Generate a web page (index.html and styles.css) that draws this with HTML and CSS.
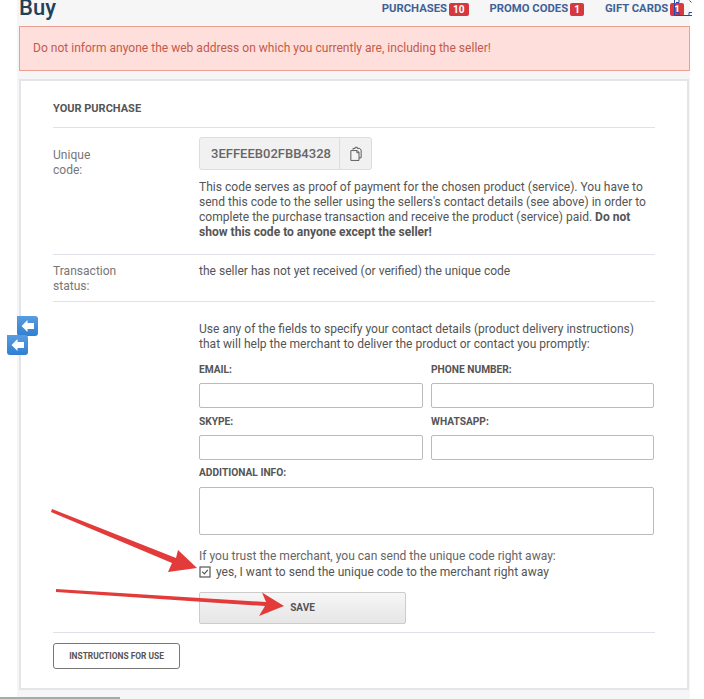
FILE: index.html
```html
<!DOCTYPE html>
<html lang="en">

<head>
	<meta charset="UTF-8">
	<meta name="viewport" content="width=device-width, initial-scale=1.0">
	<title>Buy</title>
	<link rel="stylesheet" href="styles.css">
</head>

<body>
	<div class="page">
		<header class="topbar">
			<h1>Buy</h1>
			<nav class="topnav">
				<a href="#">PURCHASES <span class="badge">10</span></a>
				<a href="#">PROMO CODES <span class="badge">1</span></a>
				<a href="#">GIFT CARDS <span class="badge">1</span></a>
			</nav>
		</header>

		<div class="alert">Do not inform anyone the web address on which you currently are, including the seller!</div>

		<main class="card">
			<h2>YOUR PURCHASE</h2>

			<section class="row row-code">
				<div class="label">Unique<br>code:</div>
				<div class="content">
					<div class="code-box">
						<span class="code">3EFFEEB02FBB4328</span>
						<span class="copy">
							<svg width="12" height="16" viewBox="0 0 14 18" fill="none" stroke="#555" stroke-width="1.1">
								<path d="M3.5 4V2.5H6V1.2H8.5V2.5H11.5L13 4.5V13.5H10.5" />
								<path d="M1 5H8.5L10.5 7V16.5H1Z" fill="#f4f4f4" />
								<path d="M8 5V7.5H10.5" />
							</svg>
						</span>
					</div>
					<p>This code serves as proof of payment for the chosen product (service). You have to send this code to the seller using the sellers's contact details (see above) in order to complete the purchase transaction and receive the product (service) paid. <b>Do not show this code to anyone except the seller!</b></p>
				</div>
			</section>

			<section class="row row-status">
				<div class="label">Transaction<br>status:</div>
				<div class="content">the seller has not yet received (or verified) the unique code</div>
			</section>

			<section class="row row-form">
				<div class="label"></div>
				<div class="content">
					<p class="intro">Use any of the fields to specify your contact details (product delivery instructions) that will help the merchant to deliver the product or contact you promptly:</p>
					<div class="fields">
						<label>EMAIL:<input type="text"></label>
						<label>PHONE NUMBER:<input type="text"></label>
						<label class="short">SKYPE:<input type="text"></label>
						<label class="short">WHATSAPP:<input type="text"></label>
						<label class="wide">ADDITIONAL INFO:<textarea></textarea></label>
					</div>
					<p class="trust">If you trust the merchant, you can send the unique code right away:</p>
					<div class="check">
						<svg width="12" height="12" viewBox="0 0 12 12" fill="none" stroke="#555">
							<rect x="1" y="1" width="10" height="10" stroke-width="1.2" />
							<path d="M3.2 5.6L5.4 7.8L8.8 3.8" stroke-width="1.2" />
						</svg>
						<span>yes, I want to send the unique code to the merchant right away</span>
					</div>
					<button class="save" type="button">SAVE</button>
				</div>
			</section>

			<div class="foot">
				<button class="instructions" type="button">INSTRUCTIONS FOR USE</button>
			</div>
		</main>
	</div>

	<div class="back back-1"><svg width="14" height="12" viewBox="0 0 14 12"><path d="M0.5 6L6.5 0V3H13V9H6.5V12Z" fill="#fff" /></svg></div>
	<div class="back back-2"><svg width="14" height="12" viewBox="0 0 14 12"><path d="M0.5 6L6.5 0V3H13V9H6.5V12Z" fill="#fff" /></svg></div>

	<svg class="handle" width="20" height="17" viewBox="0 0 20 17" fill="none" stroke="#2a47a8">
		<path d="M0.5 0V15.5H18" />
		<path d="M15.5 0.5L17.5 2.5M15 12.5H18M15 12.5V15M2 12.5H5M5 12.5V15M2 2.5H5V0" stroke-width="1" />
	</svg>

	<svg class="arrows" width="704" height="699" viewBox="0 0 704 699">
		<path d="M52 509L176 558L178 550L197 568L168 572L172 563L51 512Z" fill="#e33a3a" />
		<path d="M56 589L266 602L262 592.5L284 606L259 616L265 606L56 592Z" fill="#e33a3a" />
	</svg>

	<div class="bottom-line"></div>
</body>

</html>
```

FILE: styles.css
```css
* {
	box-sizing: border-box;
}

html,
body {
	margin: 0;
	height: 699px;
	overflow: hidden;
	background: #fff;
}

body {
	font-family: Roboto, sans-serif;
	font-size: 12.05px;
	color: #555;
}

.page {
	width: 673px;
	height: 699px;
	margin-left: 17px;
	padding-left: 2px;
	background: #f6f6f7;
}

.topbar {
	height: 26px;
	display: flex;
	justify-content: space-between;
}

h1 {
	margin: -6px 0 0;
	font-size: 22px;
	line-height: 28px;
	font-weight: 500;
	color: #23405a;
}

.topnav {
	display: flex;
	gap: 21px;
	padding-top: 2px;
	padding-right: 6px;
}

.topnav a {
	display: flex;
	gap: 2px;
	font-size: 11.3px;
	line-height: 14px;
	font-weight: 700;
	color: #3f6296;
	text-decoration: none;
}

.badge {
	height: 13px;
	margin-top: 1px;
	padding: 0 4px;
	border-radius: 2px;
	background: #d5393f;
	color: #fff;
	font-size: 10px;
	line-height: 13px;
	text-align: center;
}

.alert {
	width: 671px;
	height: 45px;
	padding-left: 13px;
	border: 1px solid #ea9f91;
	background: #fedfdb;
	color: #c45a4c;
	line-height: 43px;
}

.card {
	width: 670px;
	height: 611px;
	margin-top: 8px;
	padding: 0 32px;
	border: 2px solid #e4e5e8;
	background: #fff;
}

h2 {
	margin: 0;
	height: 47px;
	padding-top: 21px;
	border-bottom: 1px solid #dfe2e8;
	font-size: 11px;
	line-height: 14px;
	font-weight: 700;
	color: #555;
}

.row {
	display: flex;
	border-bottom: 1px solid #dfe2e8;
}

.label {
	width: 146px;
	flex: none;
	color: #777;
	line-height: 15px;
}

.content {
	flex: 1;
	line-height: 15px;
}

p {
	margin: 0;
}

.row-code {
	height: 127px;
	padding-top: 9px;
}

.row-code .label {
	padding-top: 11px;
}

.code-box {
	display: flex;
	width: 173px;
	height: 33px;
	margin-bottom: 10px;
	border: 1px solid #ddd;
	border-radius: 3px;
	background: #f1f1f1;
}

.code {
	width: 140px;
	padding-left: 3px;
	text-align: center;
	font-size: 13px;
	font-weight: 500;
	line-height: 31px;
	color: #666;
	border-right: 1px solid #ddd;
}

.copy {
	flex: 1;
	display: flex;
	align-items: center;
	justify-content: center;
}

.row-status {
	height: 47px;
	padding-top: 9px;
}

.row-form {
	height: 331px;
	padding-top: 20px;
}

.fields {
	display: grid;
	grid-template-columns: 224px 223px;
	column-gap: 8px;
	margin-top: 11px;
}

.fields label {
	display: block;
	height: 52px;
	font-size: 10.2px;
	font-weight: 700;
	line-height: 14px;
	color: #555;
}

.fields .short {
	height: 51px;
}

.fields .wide {
	grid-column: span 2;
	height: 78px;
}

.fields input,
.fields textarea {
	display: block;
	width: 100%;
	height: 25px;
	margin-top: 6px;
	border: 1px solid #bbb;
	border-radius: 2px;
	background: #fff;
	resize: none;
}

.fields textarea {
	height: 48px;
	margin-top: 7px;
}

.trust {
	margin-top: 5px;
	color: #666;
}

.check {
	display: flex;
	align-items: center;
	gap: 5px;
	height: 16px;
}

.save {
	display: block;
	width: 207px;
	height: 32px;
	margin-top: 12px;
	padding: 0 0 2px;
	border: 1px solid #ccc;
	border-radius: 2px;
	background: linear-gradient(#f6f6f6, #e6e6e6);
	font-family: Roboto, sans-serif;
	font-size: 10px;
	font-weight: 700;
	color: #555;
}

.foot {
	padding-top: 10px;
}

.instructions {
	display: block;
	width: 127px;
	height: 26px;
	padding: 0;
	border: 1px solid #777;
	border-radius: 3px;
	background: #fff;
	font-family: Roboto, sans-serif;
	font-size: 8.4px;
	font-weight: 700;
	color: #555;
}

/* overlays from the screenshot annotations */
.back {
	position: absolute;
	width: 21px;
	height: 20px;
	display: flex;
	align-items: center;
	justify-content: center;
	background: linear-gradient(#5a9ce0, #2f7fd2);
	border-radius: 0 3px 3px 3px;
}

.back-1 {
	left: 17px;
	top: 316px;
}

.back-2 {
	left: 7px;
	top: 335px;
}

.handle {
	position: absolute;
	left: 674px;
	top: 0;
}

.arrows {
	position: absolute;
	left: 0;
	top: 0;
	pointer-events: none;
}

.bottom-line {
	position: absolute;
	left: 0;
	top: 697px;
	width: 120px;
	height: 2px;
	background: #aaa;
}
```
